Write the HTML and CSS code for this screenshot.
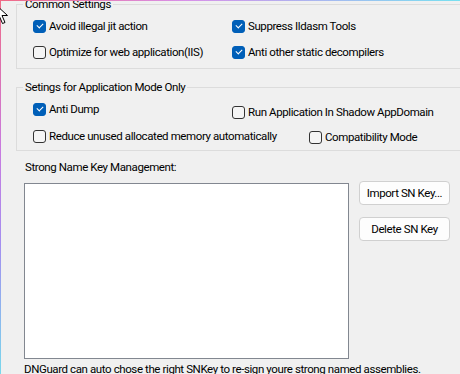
FILE: index.html
```html
<!DOCTYPE html>
<html>
<head>
<meta charset="utf-8">
<link rel="stylesheet" href="styles.css">
</head>
<body>
<div class="frame">
  <fieldset class="group group-common">
    <legend>Common Settings</legend>
    <div class="grid-common">
      <label class="cb"><span class="box checked"></span>Avoid illegal jit action</label>
      <label class="cb"><span class="box checked"></span>Suppress Ildasm Tools</label>
      <label class="cb"><span class="box"></span>Optimize for web application(IIS)</label>
      <label class="cb"><span class="box checked"></span>Anti other static decompilers</label>
    </div>
  </fieldset>

  <fieldset class="group group-app">
    <legend>Setings for Application Mode Only</legend>
    <div class="app-row app-row1">
      <label class="cb"><span class="box checked"></span>Anti Dump</label>
      <label class="cb shift-a"><span class="box"></span>Run Application In Shadow AppDomain</label>
    </div>
    <div class="app-row app-row2">
      <label class="cb"><span class="box"></span>Reduce unused allocated memory automatically</label>
      <label class="cb shift-b"><span class="box"></span>Compatibility Mode</label>
    </div>
  </fieldset>

  <div class="sn-label">Strong Name Key Management:</div>
  <div class="sn-area">
    <div class="listbox"></div>
    <div class="buttons">
      <button class="btn">Import SN Key...</button>
      <button class="btn">Delete SN Key</button>
    </div>
  </div>
  <div class="note">DNGuard can auto chose the right SNKey to re-sign youre strong named assemblies.</div>

  <svg class="cursor" width="14" height="22" viewBox="0 0 14 22">
    <path d="M0.5 0.5 L0.5 16.5 L4.5 12.5 L7.5 19.5 L10 18.5 L7 11.5 L12.5 11.5 Z" fill="#fff" stroke="#000" stroke-width="1"/>
  </svg>
</div>
</body>
</html>
```

FILE: styles.css
```css
html, body {
  margin: 0;
  padding: 0;
}
body {
  width: 460px;
  height: 374px;
  overflow: hidden;
  background: #f0f0f0;
  font-family: Roboto, "Segoe UI", sans-serif;
  font-size: 11.5px;
  letter-spacing: -0.4px;
  color: #000;
}
.frame {
  position: relative;
  width: 460px;
  height: 374px;
  overflow: hidden;
  background: #f0f0f0;
}
.frame::before {
  content: "";
  position: absolute;
  left: 0;
  top: 0;
  width: 1px;
  height: 374px;
  background: linear-gradient(to bottom, #f06a86 0%, #c87ae0 40%, #a48ef0 65%, #78d8ec 100%);
}
.frame::after {
  content: "";
  position: absolute;
  left: 0;
  top: 0;
  width: 460px;
  height: 1px;
  background: linear-gradient(to right, #f06a86 0%, #d890e8 40%, #a8b8f0 70%, #78e0f0 100%);
}
.cursor {
  position: absolute;
  left: -5px;
  top: 4px;
}
.group {
  border: 1px solid #dcdcdc;
  margin: 0 -20px 0 16px;
  padding: 0;
  min-width: 0;
}
.group legend {
  margin-left: 6px;
  padding: 0 2px;
  line-height: 14px;
  height: 14px;
}
.group-common {
  margin-top: -3px;
  height: 72px;
  box-sizing: border-box;
}
.grid-common {
  display: grid;
  grid-template-columns: 199px auto;
  row-gap: 10px;
  padding: 7px 0 0 16px;
}
.cb {
  display: flex;
  align-items: center;
  gap: 3px;
  height: 16px;
  white-space: nowrap;
}
.box {
  width: 13px;
  height: 13px;
  box-sizing: border-box;
  border: 1px solid #333;
  border-radius: 3px;
  background: #f5f5f5;
  flex: none;
  position: relative;
}
.box.checked {
  background: #005fb8;
  border-color: #005fb8;
}
.box.checked::after {
  content: "";
  position: absolute;
  left: 3px;
  top: 2px;
  width: 5px;
  height: 3px;
  border-left: 1px solid #fff;
  border-bottom: 1px solid #fff;
  transform: rotate(-45deg);
}
.group-app {
  margin-top: 11px;
  height: 71px;
  box-sizing: border-box;
}
.app-row {
  display: flex;
  padding-left: 16px;
}
.app-row1 {
  margin-top: 7px;
}
.app-row2 {
  margin-top: 8px;
}
.app-row1 .cb:first-child {
  width: 199px;
}
.shift-a {
  margin-top: 3px;
}
.app-row2 .cb:first-child {
  width: 276px;
}
.shift-b {
  margin-top: 1px;
}
.sn-label {
  margin: 8px 0 0 25px;
  line-height: 16px;
}
.sn-area {
  display: flex;
  align-items: flex-start;
  margin: 0 0 0 24px;
}
.listbox {
  margin-top: 8px;
  width: 325px;
  height: 176px;
  box-sizing: border-box;
  border: 1px solid #828790;
  background: #fff;
}
.buttons {
  display: flex;
  flex-direction: column;
  gap: 12px;
  margin: 6px 0 0 10px;
}
.btn {
  width: 91px;
  height: 24px;
  box-sizing: border-box;
  border: 1px solid #d0d0d0;
  border-radius: 4px;
  background: #fdfdfd;
  font: inherit;
  letter-spacing: inherit;
  color: #000;
  padding: 0;
  white-space: nowrap;
}
.note {
  margin: 2px 0 0 24px;
  line-height: 16px;
  white-space: nowrap;
}
```
